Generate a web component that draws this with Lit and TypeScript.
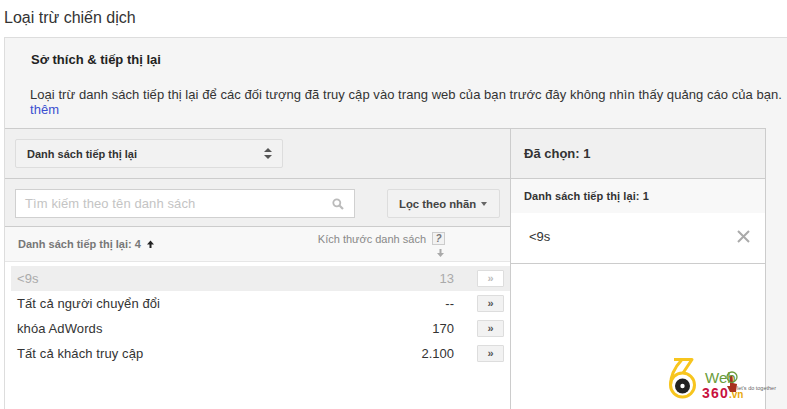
import { LitElement, html, css } from "lit";
import { customElement } from "lit/decorators.js";

const rows = [
  { name: "<9s", size: "13", off: true },
  { name: "Tất cả người chuyển đổi", size: "--", off: false },
  { name: "khóa AdWords", size: "170", off: false },
  { name: "Tất cả khách truy cập", size: "2.100", off: false },
];

@customElement("app-root")
export class AppRoot extends LitElement {
  static styles = css`
    :host { display: block; width: 787px; height: 409px; overflow: hidden; position: relative; background: #fff;
      font-family: "Liberation Sans", Arial, sans-serif; font-size: 13px; color: #333; }
    .title { font-size: 16px; line-height: 20px; padding: 8px 0 0 4px; box-sizing: border-box; color: #333; height: 37px; }
    .panel { margin-left: 4px; height: 372px; box-sizing: border-box; border-top: 1px solid #ddd; border-left: 1px solid #ddd; background: #f5f5f5; }
    .intro { height: 90px; box-sizing: border-box; padding: 14px 0 0 25px; width: 782px; }
    .intro h3 { margin: 0; padding-left: 1px; font-size: 13px; line-height: 16px; font-weight: bold; color: #222; }
    .intro p { margin: 19px 0 0; line-height: 15px; white-space: nowrap; height: 30px; width: 770px; color: #333; letter-spacing: 0.05px; }
    .intro a { color: #3b4fd0; display: block; }
    .table { width: 761px; height: 282px; box-sizing: border-box; border-top: 1px solid #ccc; border-right: 1px solid #ccc; display: grid; grid-template-columns: 506px 254px; background: #fff; }
    .left { border-right: 1px solid #ccc; box-sizing: border-box; display: flex; flex-direction: column; }
    .topbar { height: 50px; flex: none; box-sizing: border-box; background: #f0f0f0; border-bottom: 1px solid #ccc; padding: 10px; }
    .select { width: 268px; height: 29px; box-sizing: border-box; border: 1px solid #ddd; border-radius: 2px; background: #f2f2f2; display: flex; align-items: center; justify-content: space-between; padding: 0 10px 0 11px; font-size: 11px; font-weight: bold; color: #333; }
    .searchrow { height: 48px; flex: none; box-sizing: border-box; background: #f0f0f0; border-bottom: 1px solid #ccc; display: flex; padding: 10px 10px 0; justify-content: space-between; }
    .search { width: 340px; height: 29px; box-sizing: border-box; border: 1px solid #d0d0d0; background: #fff; display: flex; align-items: center; justify-content: space-between; padding: 0 10px 0 9px; font-size: 13px; letter-spacing: 0.1px; color: #c4c4c4; }
    .filter { width: 113px; height: 29px; box-sizing: border-box; border: 1px solid #ddd; border-radius: 2px; background: #f2f2f2; display: flex; align-items: center; gap: 5px; padding-left: 11px; font-size: 11.3px; font-weight: bold; color: #444; }
    .caret { width: 0; height: 0; border: 3.5px solid transparent; border-top: 4px solid #666; border-bottom: 0; }
    .colhead { height: 35px; flex: none; box-sizing: border-box; background: #f8f8f8; border-bottom: 1px solid #e6e6e6; display: flex; justify-content: space-between; color: #777; font-size: 11px; position: relative; }
    .colname { font-weight: bold; padding: 10px 0 0 13px; line-height: 15px; display: flex; gap: 5px; }
    .colsize { display: flex; flex-direction: column; align-items: flex-end; padding: 4px 65px 0 0; font-size: 11px; color: #888; }
    .colsize div { display: flex; gap: 6px; align-items: center; height: 15px; }
    .help { width: 11px; height: 11px; border: 1px solid #ccc; background: #f2f2f2; display: flex; align-items: center; justify-content: center; font-size: 10px; font-weight: bold; color: #777; line-height: 1; }
    .down { margin: 2px 0 0; display: block; }
    .rows { padding: 4px 0 0 6px; }
    .row { height: 25px; display: flex; align-items: center; padding: 0 6px 0 6px; color: #333; }
    .row.off { background: #eee; color: #aaa; }
    .row .name { flex: 1; letter-spacing: 0.1px; }
    .row .size { margin-right: 23px; }
    .arrow { width: 27px; height: 17px; box-sizing: border-box; border: 1px solid #ddd; background: #f2f2f2; border-radius: 1px; display: flex; align-items: center; justify-content: center; font-size: 11px; font-weight: bold; color: #555; padding-bottom: 2px; }
    .off .arrow { background: #fff; color: #bbb; }
    .right { display: flex; flex-direction: column; }
    .righthead { height: 50px; flex: none; box-sizing: border-box; background: #f0f0f0; border-bottom: 1px solid #ccc; padding: 0 13px; display: flex; align-items: center; font-weight: bold; font-size: 13px; color: #333; }
    .sub { height: 34px; flex: none; box-sizing: border-box; background: #f8f8f8; padding: 10px 13px 0; font-size: 11px; letter-spacing: 0.08px; font-weight: bold; line-height: 15px; color: #333; }
    .sel { height: 51px; flex: none; box-sizing: border-box; background: #fff; border-bottom: 1px solid #ccc; display: flex; align-items: center; justify-content: space-between; padding: 0 15px 4px 18px; color: #333; }
    .logo { position: absolute; left: 668px; top: 356px; width: 112px; height: 46px; }
    .logo .web { position: absolute; left: 37px; top: 15px; font-size: 15px; line-height: 14px; color: #6a9c3a; }
    .logo .n360 { position: absolute; left: 34px; top: 31px; font-size: 14px; line-height: 12px; font-weight: bold; color: #c8123f; letter-spacing: 1.2px; }
    .logo .vn { position: absolute; left: 61px; top: 35px; font-size: 10px; line-height: 8px; font-weight: bold; color: #e8a90c; }
    .logo .tag { position: absolute; left: 69px; top: 29px; font-size: 5.5px; line-height: 6px; color: #666; white-space: nowrap; }
    .logo svg { position: absolute; left: 0; top: 0; }
  `;

  render() {
    return html`
      <div class="title">Loại trừ chiến dịch</div>
      <div class="panel">
        <div class="intro">
          <h3>Sở thích &amp; tiếp thị lại</h3>
          <p>Loại trừ danh sách tiếp thị lại để các đối tượng đã truy cập vào trang web của bạn trước đây không nhìn thấy quảng cáo của bạn.<a>thêm</a></p>
        </div>
        <div class="table">
          <div class="left">
            <div class="topbar">
              <div class="select"><span>Danh sách tiếp thị lại</span>
                <svg width="8" height="11" viewBox="0 0 8 11"><path d="M4 0 8 4H0ZM0 7H8L4 11Z" fill="#555"/></svg></div>
            </div>
            <div class="searchrow">
              <div class="search"><span>Tìm kiếm theo tên danh sách</span>
                <svg width="12" height="12" viewBox="0 0 12 12"><circle cx="4.8" cy="4.8" r="3.5" fill="none" stroke="#bbb" stroke-width="1.8"/><path d="M7.5 7.5 11 11" stroke="#bbb" stroke-width="2.2"/></svg></div>
              <div class="filter"><span>Lọc theo nhãn</span><i class="caret"></i></div>
            </div>
            <div class="colhead">
              <div class="colname"><span>Danh sách tiếp thị lại: 4</span>
                <svg width="9" height="15" viewBox="0 0 9 15"><path d="M4.5 3.5 8 7.5H5.5V11H3.5V7.5H1Z" fill="#222"/></svg></div>
              <div class="colsize"><div><span>Kích thước danh sách</span><i class="help">?</i></div>
                <svg class="down" width="9" height="10" viewBox="0 0 9 10"><path d="M3.5 1H5.5V5H8L4.5 9 1 5H3.5Z" fill="#aaa"/></svg></div>
            </div>
            <div class="rows">
              ${rows.map((r) => html`<div class="row ${r.off ? "off" : ""}">
                <span class="name">${r.name}</span><span class="size">${r.size}</span><span class="arrow">»</span>
              </div>`)}
            </div>
          </div>
          <div class="right">
            <div class="righthead">Đã chọn: 1</div>
            <div class="sub">Danh sách tiếp thị lại: 1</div>
            <div class="sel"><span>&lt;9s</span>
              <svg width="13" height="13" viewBox="0 0 13 13"><path d="M1 1 12 12M12 1 1 12" stroke="#aaa" stroke-width="2"/></svg></div>
          </div>
        </div>
      </div>
      <div class="logo">
        <svg width="112" height="46" viewBox="0 0 112 46">
          <path d="M6 3.5H24L15 17" fill="none" stroke="#f7c51e" stroke-width="3" stroke-linejoin="round"/>
          <path d="M14 3.5C8 10 2.500 19 2.500 29" fill="none" stroke="#f7c51e" stroke-width="3"/>
          <circle cx="14.500" cy="29" r="12" fill="none" stroke="#f7c51e" stroke-width="3"/>
          <circle cx="14.500" cy="30" r="7.500" fill="#222"/><circle cx="14.500" cy="30" r="2.200" fill="#fff"/>
          <circle cx="64" cy="21" r="5" fill="none" stroke="#6a9c3a" stroke-width="1.300"/>
          <path d="M62 19.500 L64.500 19.500 L65 27 L69 28 L68 36 L62 36 L59 30 L62 30Z" fill="#a8321f"/>
        </svg>
        <span class="web">Web</span><span class="n360">360</span><span class="vn">.vn</span><span class="tag">let's do together</span>
      </div>
    `;
  }
}
